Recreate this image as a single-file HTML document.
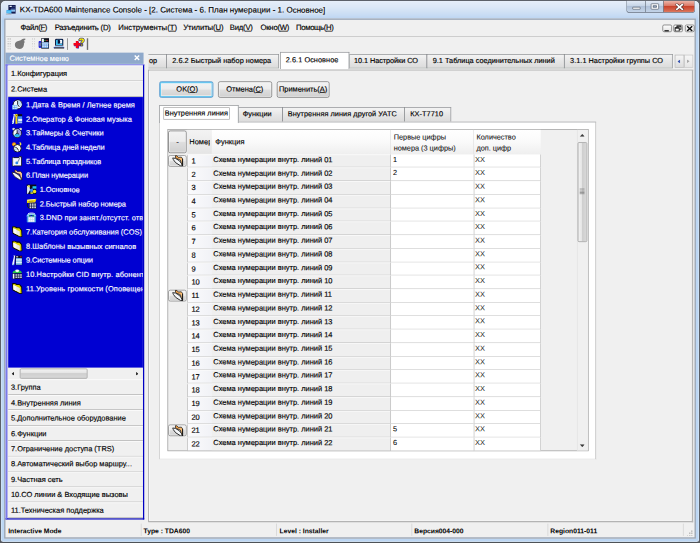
<!DOCTYPE html>
<html lang="ru"><head><meta charset="utf-8"><title>KX-TDA600 Maintenance Console</title>
<style>
html,body{margin:0;padding:0;width:700px;height:543px;overflow:hidden;background:#5a5d62;}
body{font-family:"Liberation Sans","DejaVu Sans",sans-serif;color:#000;-webkit-text-stroke:0.22px;}
#w{position:absolute;left:0;top:0;width:1024px;height:795px;transform:scale(0.68359375);transform-origin:0 0;overflow:hidden;}
#w div{box-sizing:border-box;}
#frame{position:absolute;left:0;top:0;width:1024px;height:794.3px;border-radius:8px 8px 5px 5px;background:linear-gradient(#e6eef9 0,#dbe7f6 10px,#c6dbf3 22px,#b6d1f0 29px,#bcd6f3 60px,#bcd6f3 100%);border:1px solid #45484d;box-shadow:inset 0 0 0 1px #eaf3fc;}
.t{position:absolute;height:16px;line-height:16px;white-space:nowrap;transform:matrix(1,0.0012,0,1,0,0);transform-origin:0 50%;}
u{text-decoration:underline;}
#w svg{display:block;}
.item{background:#f0f0f0;border-top:1px solid #fff;border-bottom:1px solid #a0a0a0;}
.tab{background:linear-gradient(#f4f4f4,#e6e6e6 50%,#dcdcdc);border:1px solid #8c8e92;border-bottom:none;}
.btn{background:linear-gradient(#f3f3f3,#ececec 48%,#dedede 52%,#d0d0d0);border:1px solid #707070;border-radius:3px;box-shadow:inset 0 0 0 1px rgba(255,255,255,.8);}
.w{color:#fff;}
.b{font-weight:bold;}
</style></head><body><div id="w">
<div id="frame"></div>

<div class="t" style="left:29.26px;top:6.19px;font-size:11.7px;text-shadow:0 0 5px #fff,0 0 8px #fff;">KX-TDA600 Maintenance Console - [2. Система - 6. План нумерации - 1. Основное]</div>
<div style="position:absolute;left:7.75px;top:6.88px;width:15.51px;height:15.51px;"><svg width="100%" height="100%" viewBox="0 0 16 16" preserveAspectRatio="none"><rect x="4.4" y="0.3" width="11.3" height="13" fill="#141d4e"/><rect x="6.2" y="1.5" width="3.3" height="1.8" fill="#eef3fa"/><rect x="10.5" y="2" width="4" height="1.2" fill="#3a4a8a"/><rect x="7.7" y="7.1" width="7.1" height="3.3" fill="#8cc0ee"/><rect x="8.4" y="4.6" width="6.4" height="1.4" fill="#32448e"/><rect x="1.5" y="8" width="7.5" height="5.3" fill="#2fa4ea"/><rect x="2.4" y="9" width="5.6" height="3.3" fill="#5cc4f6"/><path d="M0 15.7 L1.2 13.3 L9.4 13.3 L8.6 15.7 Z" fill="#b9bfcc"/></svg></div>
<div style="position:absolute;left:916.19px;top:0.73px;width:100.5px;height:17.99px;border:1px solid #6a7482;border-top:none;border-radius:0 0 5px 5px;overflow:hidden;background:linear-gradient(#e3ebf6,#c6d4e6 45%,#b0c1d8 50%,#c4d4e8);"><div style="position:absolute;left:27.21px;top:0;width:1px;height:100%;background:#6a7482"></div><div style="position:absolute;left:52.66px;top:0;right:0;height:100%;background:linear-gradient(#ecb8ac,#dc7a68 42%,#c9432c 50%,#d7674e 85%,#dd8068);border-left:1px solid #6a5a5e"></div><div style="position:absolute;left:8.19px;top:9.22px;width:11.41px;height:4.1px;background:#fff;border:1px solid #56606e;border-radius:1px"></div><div style="position:absolute;left:34.52px;top:4.39px;width:12.29px;height:9.07px;border:1px solid #56606e;background:#fff;border-radius:1.5px"><div style="position:absolute;left:2px;top:2px;right:2px;bottom:2px;border:1px solid #56606e;background:#a9bbd4"></div></div><svg style="position:absolute;left:71.09px;top:4.39px" width="12.29" height="10.24" viewBox="0 0 12 10"><path d="M2 1.6 L10 8.4 M10 1.6 L2 8.4" stroke="#4a3030" stroke-width="4.2" stroke-linecap="square"/><path d="M2 1.6 L10 8.4 M10 1.6 L2 8.4" stroke="#fff" stroke-width="2.4" stroke-linecap="square"/></svg></div>
<div style="position:absolute;left:6.14px;top:27.21px;width:1012.3px;height:760.69px;background:#f0f0f0;border:2.19px solid #9aa5b4;"></div>
<div class="t" style="left:30.43px;top:32.37px;font-size:11.3px;letter-spacing:-0.492px;">Файл(<u>F</u>)</div>
<div class="t" style="left:80.02px;top:32.37px;font-size:11.3px;letter-spacing:-0.319px;">Разъединить (D)</div>
<div class="t" style="left:172.62px;top:32.37px;font-size:11.3px;letter-spacing:0.101px;">Инструменты(<u>T</u>)</div>
<div class="t" style="left:267.7px;top:32.37px;font-size:11.3px;letter-spacing:-0.175px;">Утилиты(<u>U</u>)</div>
<div class="t" style="left:336.46px;top:32.37px;font-size:11.3px;letter-spacing:-0.310px;">Вид(<u>V</u>)</div>
<div class="t" style="left:381.07px;top:32.37px;font-size:11.3px;letter-spacing:-0.352px;">Окно(<u>W</u>)</div>
<div class="t" style="left:433.3px;top:32.37px;font-size:11.3px;letter-spacing:-0.497px;">Помощь(<u>H</u>)</div>
<div style="position:absolute;left:968.85px;top:35.84px;width:13.75px;height:11.56px;border:1px solid #6a6a6a;border-radius:2.5px;background:linear-gradient(#fdfdfd,#e2e2e2);overflow:hidden;"><svg style="position:absolute;left:-1px;top:-1px" width="13.75" height="11.56" viewBox="0 0 13.75 11.6"><rect x="3" y="8.2" width="6.4" height="2.4" fill="#111"/></svg></div>
<div style="position:absolute;left:985.38px;top:35.84px;width:13.75px;height:11.56px;border:1px solid #6a6a6a;border-radius:2.5px;background:linear-gradient(#fdfdfd,#e2e2e2);overflow:hidden;"><svg style="position:absolute;left:-1px;top:-1px" width="13.75" height="11.56" viewBox="0 0 13.75 11.6"><rect x="5.2" y="1.8" width="6" height="5" fill="#fff" stroke="#111" stroke-width="1.3"/><rect x="5.2" y="1.6" width="6" height="1.4" fill="#111"/><rect x="2.6" y="4.6" width="6" height="5" fill="#fff" stroke="#111" stroke-width="1.3"/><rect x="2.6" y="4.4" width="6" height="1.4" fill="#111"/></svg></div>
<div style="position:absolute;left:1002.06px;top:35.84px;width:13.75px;height:11.56px;border:1px solid #6a6a6a;border-radius:2.5px;background:linear-gradient(#fdfdfd,#e2e2e2);overflow:hidden;"><svg style="position:absolute;left:-1px;top:-1px" width="13.75" height="11.56" viewBox="0 0 13.75 11.6"><path d="M3.2 2.4 L10.6 9.4 M10.6 2.4 L3.2 9.4" stroke="#111" stroke-width="2.1"/></svg></div>
<div style="position:absolute;left:8.78px;top:52.66px;width:1007.18px;height:1.32px;background:#bdbdbd;"></div>
<div style="position:absolute;left:11.41px;top:56.47px;width:1.46px;height:1.46px;background:#c2c2c2;"></div>
<div style="position:absolute;left:14.34px;top:56.47px;width:1.46px;height:1.46px;background:#c2c2c2;"></div>
<div style="position:absolute;left:11.41px;top:59.98px;width:1.46px;height:1.46px;background:#c2c2c2;"></div>
<div style="position:absolute;left:14.34px;top:59.98px;width:1.46px;height:1.46px;background:#c2c2c2;"></div>
<div style="position:absolute;left:11.41px;top:63.49px;width:1.46px;height:1.46px;background:#c2c2c2;"></div>
<div style="position:absolute;left:14.34px;top:63.49px;width:1.46px;height:1.46px;background:#c2c2c2;"></div>
<div style="position:absolute;left:11.41px;top:67.0px;width:1.46px;height:1.46px;background:#c2c2c2;"></div>
<div style="position:absolute;left:14.34px;top:67.0px;width:1.46px;height:1.46px;background:#c2c2c2;"></div>
<div style="position:absolute;left:11.41px;top:70.51px;width:1.46px;height:1.46px;background:#c2c2c2;"></div>
<div style="position:absolute;left:14.34px;top:70.51px;width:1.46px;height:1.46px;background:#c2c2c2;"></div>
<div style="position:absolute;left:46.81px;top:56.47px;width:1.46px;height:1.46px;background:#c2c2c2;"></div>
<div style="position:absolute;left:49.74px;top:56.47px;width:1.46px;height:1.46px;background:#c2c2c2;"></div>
<div style="position:absolute;left:46.81px;top:59.98px;width:1.46px;height:1.46px;background:#c2c2c2;"></div>
<div style="position:absolute;left:49.74px;top:59.98px;width:1.46px;height:1.46px;background:#c2c2c2;"></div>
<div style="position:absolute;left:46.81px;top:63.49px;width:1.46px;height:1.46px;background:#c2c2c2;"></div>
<div style="position:absolute;left:49.74px;top:63.49px;width:1.46px;height:1.46px;background:#c2c2c2;"></div>
<div style="position:absolute;left:46.81px;top:67.0px;width:1.46px;height:1.46px;background:#c2c2c2;"></div>
<div style="position:absolute;left:49.74px;top:67.0px;width:1.46px;height:1.46px;background:#c2c2c2;"></div>
<div style="position:absolute;left:46.81px;top:70.51px;width:1.46px;height:1.46px;background:#c2c2c2;"></div>
<div style="position:absolute;left:49.74px;top:70.51px;width:1.46px;height:1.46px;background:#c2c2c2;"></div>
<div style="position:absolute;left:21.36px;top:55.88px;width:16.97px;height:16.38px;"><svg width="100%" height="100%" viewBox="0 0 16 16" preserveAspectRatio="none"><path d="M6.6 3.6 C8.2 3.4 9.4 2.6 10.6 1.4 C11.8 0.3 14.6 0.2 15.6 1 C15.2 2.2 13.8 2.6 12.8 3.8 C13.6 4.4 14.4 4.6 14.8 5.4 L13 6.6 C13.8 7.6 13.6 8.4 13.2 9 C13.2 12.6 10.6 15.4 6.8 15.4 C3 15.4 0.6 12.6 0.6 9.4 C0.6 6.2 3.2 3.8 6.6 3.6 Z" fill="#777"/></svg></div>
<div style="position:absolute;left:55.88px;top:55.3px;width:16.09px;height:16.97px;"><svg width="100%" height="100%" viewBox="0 0 16 16" preserveAspectRatio="none"><rect x="0.3" y="4.6" width="4.4" height="9.6" rx="1.6" fill="#2323e0"/><rect x="1.4" y="7" width="2.6" height="4.8" fill="#6d78a8"/><rect x="4.3" y="0.8" width="11.3" height="14.4" fill="#0c0f1c"/><rect x="5.2" y="1.6" width="3" height="4.4" fill="#f3f7fc"/><rect x="8.6" y="3.2" width="2.4" height="1.2" fill="#3cb050"/><rect x="11.4" y="3.2" width="2.4" height="1.2" fill="#d83838"/><rect x="5.2" y="6.6" width="9.6" height="7.6" fill="#5f9fe8"/><rect x="5.2" y="6.6" width="9.6" height="2" fill="#b8d6f6"/><g fill="#f0f6fd"><rect x="5.8" y="9.4" width="2.2" height="1.5"/><rect x="8.9" y="9.4" width="2.2" height="1.5"/><rect x="12" y="9.4" width="2.2" height="1.5"/><rect x="5.8" y="11.8" width="2.2" height="1.5"/><rect x="8.9" y="11.8" width="2.2" height="1.5"/><rect x="12" y="11.8" width="2.2" height="1.5"/></g></svg></div>
<div style="position:absolute;left:77.53px;top:56.47px;width:16.68px;height:15.8px;"><svg width="100%" height="100%" viewBox="0 0 16 16" preserveAspectRatio="none"><path d="M2.4 3 C2.4 1.2 3.4 0.6 5 0.6 L11.4 0.6 C13 0.6 14 1.2 14 3 L14 11 L2.4 11 Z" fill="#10163c"/><path d="M3.8 3.2 C3.8 2.4 4.4 2 5.2 2 L11.2 2 C12 2 12.6 2.4 12.6 3.2 L12.6 9.8 L3.8 9.8 Z" fill="#3fc0f2"/><rect x="6.2" y="2.4" width="6" height="5.6" fill="#0c1236"/><path d="M8.8 2.6 L12.2 2.6 L12.2 7.8 L8.8 7.8 C10 6.6 10 3.8 8.8 2.6 Z" fill="#f2f7fc"/><path d="M1.4 13.4 L3 11 L13.4 11 L15 13.4 Z" fill="#9ec4ee"/><rect x="0.8" y="13.4" width="14.8" height="1.7" fill="#0b0e22"/><rect x="0.4" y="12.8" width="1.4" height="1.4" fill="#2a3ad8"/><rect x="14.4" y="12.8" width="1.4" height="1.4" fill="#2a3ad8"/></svg></div>
<div style="position:absolute;left:97.87px;top:56.03px;width:1.32px;height:16.68px;background:#6c6c6c;"></div>
<div style="position:absolute;left:106.5px;top:55.3px;width:17.26px;height:16.97px;"><svg width="100%" height="100%" viewBox="0 0 16 16" preserveAspectRatio="none"><path d="M4 5.2 H7.4 V8 H10.2 V11.4 H7.4 V14.6 H4 V11.4 H0.8 V8 H4 Z" fill="#3030c0" transform="translate(0.5,0.6)"/><path d="M3.6 4.6 H7.2 V7.6 H10 V11 H7.2 V14.2 H3.6 V11 H0.4 V7.6 H3.6 Z" fill="#f4001c"/><path d="M7.6 4 C7.4 1.4 9.4 0.5 11.4 0.5 C13.8 0.5 15.4 1.8 15.4 3.8 C15.4 6 13.2 6.4 13 8 H10.2 C10.2 5.8 12.2 5.2 12.2 4 C12.2 3.2 10.8 3.2 10.6 4.6 Z M10.2 9 H13 V11.6 H10.2 Z" fill="#f8ec00" stroke="#1a1a70" stroke-width="1" stroke-linejoin="round"/></svg></div>
<div style="position:absolute;left:127.27px;top:56.03px;width:1.32px;height:16.68px;background:#6c6c6c;"></div>
<div style="position:absolute;left:8.48px;top:76.8px;width:201.87px;height:17.12px;background:linear-gradient(#8fa9cb 90%,#a9c6d2);"></div>
<div class="t" style="left:14.04px;top:77.43px;font-size:10.9px;color:#fff;">Системное меню</div>
<div style="position:absolute;left:196.46px;top:80.46px;width:8.63px;height:8.78px;"><svg width="100%" height="100%" viewBox="0 0 8 8"><path d="M1 1 L7 7 M7 1 L1 7" stroke="#fff" stroke-width="1.9"/></svg></div>
<div style="position:absolute;left:8.48px;top:93.92px;width:202.46px;height:665.6px;background:#f0f0f0;border-style:solid;border-color:#7a7aea #0000c4 #0000c4 #7a7aea;border-width:2px 2px 2px 3px;"></div>
<div class="item" style="position:absolute;left:11.85px;top:95.82px;width:197.19px;height:23.55px;"></div>
<div class="t" style="left:15.95px;top:99.15px;font-size:10.9px;">1.Конфигурация</div>
<div class="item" style="position:absolute;left:11.85px;top:119.37px;width:197.19px;height:22.24px;"></div>
<div class="t" style="left:15.95px;top:122.05px;font-size:10.9px;">2.Система</div>
<div style="position:absolute;left:11.85px;top:141.6px;width:197.19px;height:396.14px;background:#0000d2;overflow:hidden;"></div>
<div class="t" style="left:37.74px;top:144.87px;font-size:10.9px;letter-spacing:0.024px;color:#fff;">1.Дата &amp; Время / Летнее время</div>
<div style="position:absolute;left:17.41px;top:144.97px;width:15.95px;height:15.95px;"><svg width="100%" height="100%" viewBox="0 0 16 16" preserveAspectRatio="none"><circle cx="8.8" cy="7.8" r="6.6" fill="#eef6fc" stroke="#0a0a14" stroke-width="1.3"/><path d="M8.8 7.8 L8.8 1.8 A6 6 0 0 1 13.8 11 Z" fill="#bfe2f6"/><path d="M8.8 2.6 V8 L11.4 11.4" stroke="#16161e" stroke-width="1.3" fill="none"/><rect x="0.8" y="8.6" width="7.6" height="6.6" fill="#66b6ee"/><rect x="1.8" y="9.6" width="2.3" height="4.6" fill="#f0f7fd"/><rect x="5.1" y="9.6" width="2.3" height="4.6" fill="#f0f7fd"/><rect x="1.8" y="11.4" width="5.6" height="1" fill="#3f8ade"/></svg></div>
<div class="t" style="left:37.74px;top:165.55px;font-size:10.9px;letter-spacing:-0.027px;color:#fff;">2.Оператор &amp; Фоновая музыка</div>
<div style="position:absolute;left:17.41px;top:165.65px;width:15.95px;height:15.95px;"><svg width="100%" height="100%" viewBox="0 0 16 16" preserveAspectRatio="none"><path d="M0.6 13.4 L3.2 2 L2.2 0.8 L5 0.8 L4.6 2.4 L3.4 15 L0.8 15.4 Z" fill="#f2f6fa"/><path d="M1 13 L3.4 15" stroke="#3a8ee8" stroke-width="1.4"/><rect x="5.6" y="3.4" width="3" height="11.8" fill="#f4da10"/><circle cx="7.1" cy="2.8" r="2.3" fill="#f4da10"/><circle cx="7.1" cy="2.8" r="0.9" fill="#8a7a10"/><rect x="8.8" y="1" width="6.8" height="3.2" fill="#0c0c18"/><rect x="8.8" y="4.2" width="6.8" height="7" fill="#3c8ef0"/><rect x="9.6" y="8" width="6" height="3.4" fill="#e6f2fc"/><rect x="8.8" y="11.6" width="6.8" height="2.8" fill="#9cc8f4"/></svg></div>
<div class="t" style="left:37.74px;top:186.24px;font-size:10.9px;letter-spacing:-0.060px;color:#fff;">3.Таймеры &amp; Счетчики</div>
<div style="position:absolute;left:17.41px;top:186.34px;width:15.95px;height:15.95px;"><svg width="100%" height="100%" viewBox="0 0 16 16" preserveAspectRatio="none"><circle cx="3" cy="2.8" r="2" fill="#d8dad0"/><circle cx="13.2" cy="2.8" r="2" fill="#d8dad0"/><circle cx="8.1" cy="8.8" r="6.3" fill="#f2f6fa" stroke="#0a0a14" stroke-width="1.3"/><path d="M8.1 8.8 L8.1 2.9 A5.9 5.9 0 0 1 13.2 11.8 Z" fill="#9a98e4"/><path d="M8.1 8.8 L13.2 11.8 A5.9 5.9 0 0 1 3 11.8 Z" fill="#2fb2f0"/><path d="M8.1 4.5 V8.8 L11 10.4 M8.1 8.8 L5.6 10.6" stroke="#0a0a14" stroke-width="1.2" fill="none"/></svg></div>
<div class="t" style="left:37.74px;top:206.92px;font-size:10.9px;letter-spacing:-0.187px;color:#fff;">4.Таблица дней недели</div>
<div style="position:absolute;left:17.41px;top:207.02px;width:15.95px;height:15.95px;"><svg width="100%" height="100%" viewBox="0 0 16 16" preserveAspectRatio="none"><circle cx="3.6" cy="4" r="3" fill="#ee7a12"/><circle cx="3.8" cy="4.2" r="1.7" fill="#f9d422"/><path d="M11.2 0.6 C14.6 1 15.6 4.6 12.6 6.6 L10.6 6 C12.6 4.6 12.6 2.4 11.2 0.6 Z" fill="#efe24a"/><circle cx="8.5" cy="10" r="5.6" fill="#f6f8fa" stroke="#0a0a14" stroke-width="1.3"/><path d="M8.5 10 L5.4 8.4 M8.5 10 L10 13.2" stroke="#0a0a14" stroke-width="1.3" fill="none"/><circle cx="6" cy="12" r="1.6" fill="#a8d8f0"/></svg></div>
<div class="t" style="left:37.74px;top:227.61px;font-size:10.9px;letter-spacing:-0.133px;color:#fff;">5.Таблица праздников</div>
<div style="position:absolute;left:17.41px;top:227.71px;width:15.95px;height:15.95px;"><svg width="100%" height="100%" viewBox="0 0 16 16" preserveAspectRatio="none"><path d="M1.4 2.6 L10.4 2.6 L11.6 0.8 L14.6 1.4 L14.6 14.8 L1.4 14.8 Z" fill="#f6f8fb" stroke="#0a0a14" stroke-width="1.2" stroke-linejoin="round"/><path d="M12.6 1.6 L8.6 10" stroke="#8a93a6" stroke-width="1.5"/><circle cx="7.6" cy="10.4" r="2.1" fill="#2f86e8"/><rect x="1.6" y="2.8" width="1.8" height="11.6" fill="#dfe6f0"/></svg></div>
<div class="t" style="left:37.74px;top:248.29px;font-size:10.9px;letter-spacing:-0.197px;color:#fff;">6.План нумерации</div>
<div style="position:absolute;left:17.41px;top:248.39px;width:15.95px;height:15.95px;"><svg width="100%" height="100%" viewBox="0 0 16 16" preserveAspectRatio="none"><path d="M0.4 4 L4.7 4.6 L10 7.7 L13.2 11.4 L15.1 15.4 L11.9 15.1 L5 10.8 L1.6 6.5 Z" fill="#f4f5f6" stroke="#1a1a1a" stroke-width="1.1" stroke-linejoin="round"/><path d="M4.7 0.4 L6.9 0.9 L8.8 3.1 L13.2 2.8 L15.3 5.6 L15.3 15 L13.2 11.4 L11.9 7.1 L6.3 4.6 L4.7 3.6 Z" fill="#f8b268" stroke="#1a1a1a" stroke-width="0.9" stroke-linejoin="round"/><path d="M6.4 2.2 L8.4 4.2 L12.8 4.2 L14.4 6.6 L14.4 11" stroke="#fde0bc" stroke-width="1.2" fill="none"/></svg></div>
<div class="t" style="left:58.37px;top:268.98px;font-size:10.9px;letter-spacing:-0.052px;color:#fff;">1.Основное</div>
<div style="position:absolute;left:38.03px;top:269.08px;width:15.95px;height:15.95px;"><svg width="100%" height="100%" viewBox="0 0 16 16" preserveAspectRatio="none"><rect x="1" y="1" width="14" height="14" fill="#0a0c1a"/><path d="M1.6 3 L5 2 L6 9 L3 14.4 L1.6 14.4 Z" fill="#dfeaf6"/><rect x="9.6" y="3.4" width="5.8" height="3.6" fill="#22c6f2"/><path d="M5.6 8 L9.6 6.4 L11 10 L7 13.4 Z" fill="#3a86ee"/><circle cx="12.6" cy="11.2" r="2.6" fill="#f2e620"/><rect x="2.6" y="2.2" width="3" height="2.6" fill="#e8e04a"/><rect x="6.6" y="12.4" width="4" height="2.2" fill="#d6dc4a"/></svg></div>
<div class="t" style="left:58.37px;top:289.66px;font-size:10.9px;letter-spacing:-0.118px;color:#fff;">2.Быстрый набор номера</div>
<div style="position:absolute;left:38.03px;top:289.76px;width:15.95px;height:15.95px;"><svg width="100%" height="100%" viewBox="0 0 16 16" preserveAspectRatio="none"><path d="M1.4 2.2 L15.4 0.8 L13.6 6.4 L1.4 7 Z" fill="#f2d808"/><path d="M2 3 L13 1.8" stroke="#fbf6c0" stroke-width="1.3"/><path d="M4 4.8 L11 4.2" stroke="#a08a10" stroke-width="1"/><rect x="4.4" y="6.8" width="11" height="8.6" fill="#10143a"/><path d="M2.6 7 C1.6 9.6 2 12.6 4.4 14.4" stroke="#10143a" stroke-width="1.6" fill="none"/><g fill="#eef2f8"><rect x="5.4" y="7.8" width="2.4" height="1.8"/><rect x="8.8" y="7.8" width="2.4" height="1.8"/><rect x="12.2" y="7.8" width="2.4" height="1.8"/><rect x="5.4" y="10.4" width="2.4" height="1.8"/><rect x="8.8" y="10.4" width="2.4" height="1.8"/><rect x="12.2" y="10.4" width="2.4" height="1.8"/><rect x="5.4" y="13" width="2.4" height="1.6"/><rect x="8.8" y="13" width="2.4" height="1.6"/><rect x="12.2" y="13" width="2.4" height="1.6"/></g></svg></div>
<div class="t" style="left:58.37px;top:310.35px;width:150.82px;font-size:10.9px;letter-spacing:0.13px;overflow:hidden;color:#fff;">3.DND при занят./отсутст. отв</div>
<div style="position:absolute;left:38.03px;top:310.45px;width:15.95px;height:15.95px;"><svg width="100%" height="100%" viewBox="0 0 16 16" preserveAspectRatio="none"><path d="M1 5.6 C1 0.8 15 0.8 15 5.6 L15 7 L11.4 7 L11.4 4.6 L4.6 4.6 L4.6 7 L1 7 Z" fill="#86ccf2"/><path d="M3 2.6 C6 1.2 10 1.2 13 2.6" stroke="#f2f8fc" stroke-width="1.2" fill="none"/><rect x="1.2" y="6.4" width="13.6" height="9" rx="1" fill="#3f93e6"/><rect x="3.2" y="6.8" width="9.6" height="8.2" fill="#c4dcee"/><circle cx="5.6" cy="5.8" r="1.3" fill="#1fa044"/><circle cx="10.4" cy="5.8" r="1.3" fill="#1fa044"/><g fill="#f4f8fb"><rect x="4.2" y="8.6" width="2" height="2.2"/><rect x="7" y="8.6" width="2" height="2.2"/><rect x="9.8" y="8.6" width="2" height="2.2"/><rect x="4.2" y="11.8" width="2" height="2.2"/><rect x="7" y="11.8" width="2" height="2.2"/><rect x="9.8" y="11.8" width="2" height="2.2"/></g></svg></div>
<div class="t" style="left:37.74px;top:331.03px;font-size:10.9px;letter-spacing:0.001px;color:#fff;">7.Категория обслуживания (COS)</div>
<div style="position:absolute;left:17.41px;top:331.13px;width:15.95px;height:15.95px;"><svg width="100%" height="100%" viewBox="0 0 16 16" preserveAspectRatio="none"><path d="M1.4 0.8 L4.3 0.4 L7.7 2.2 L11.5 2.2 L14.8 6.1 L15.3 15 L12.1 15.6 L2.1 10.3 Z" fill="#ddd400" stroke="#0a0a0a" stroke-width="1.5" stroke-linejoin="round"/><path d="M2.5 3 L12 7.5 L12 14.4 L2.8 9.5 Z" fill="#e9e9e4"/><path d="M2.5 3 L7 5.1 L7 11.8 L2.8 9.5 Z" fill="#fafaf6"/></svg></div>
<div class="t" style="left:37.74px;top:351.72px;font-size:10.9px;letter-spacing:0.016px;color:#fff;">8.Шаблоны вызывных сигналов</div>
<div style="position:absolute;left:17.41px;top:351.82px;width:15.95px;height:15.95px;"><svg width="100%" height="100%" viewBox="0 0 16 16" preserveAspectRatio="none"><path d="M1.4 0.8 L4.3 0.4 L7.7 2.2 L11.5 2.2 L14.8 6.1 L15.3 15 L12.1 15.6 L2.1 10.3 Z" fill="#ddd400" stroke="#0a0a0a" stroke-width="1.5" stroke-linejoin="round"/><path d="M2.5 3 L12 7.5 L12 14.4 L2.8 9.5 Z" fill="#e9e9e4"/><path d="M2.5 3 L7 5.1 L7 11.8 L2.8 9.5 Z" fill="#fafaf6"/></svg></div>
<div class="t" style="left:37.74px;top:372.4px;font-size:10.9px;letter-spacing:-0.132px;color:#fff;">9.Системные опции</div>
<div style="position:absolute;left:17.41px;top:372.5px;width:15.95px;height:15.95px;"><svg width="100%" height="100%" viewBox="0 0 16 16" preserveAspectRatio="none"><path d="M0.6 13.6 L3.4 2.2 L2.6 0.8 L5.4 0.8 L5 2.6 L3.6 15 L1 15.4 Z" fill="#f2f6fa"/><path d="M1 13.2 L3.4 15" stroke="#3a8ee8" stroke-width="1.4"/><rect x="5.6" y="1" width="10" height="14.2" fill="#0c0e1e"/><rect x="6.4" y="4.6" width="8.6" height="9.8" fill="#86c6f2"/><rect x="6.4" y="6.4" width="8.6" height="1.6" fill="#eef6fc"/><rect x="6.4" y="10" width="8.6" height="1.6" fill="#eef6fc"/><rect x="12.6" y="2" width="2" height="1.4" fill="#e03030"/><rect x="6.6" y="2" width="3" height="1.4" fill="#f0f4f8"/></svg></div>
<div class="t" style="left:37.74px;top:393.09px;width:171.45px;font-size:10.9px;letter-spacing:0.13px;overflow:hidden;color:#fff;">10.Настройки CID внутр. абоненто</div>
<div style="position:absolute;left:17.41px;top:393.19px;width:15.95px;height:15.95px;"><svg width="100%" height="100%" viewBox="0 0 16 16" preserveAspectRatio="none"><path d="M1.6 5.8 C1.6 0.8 14.8 0.8 14.8 5.8 L14.8 6.6 L1.6 6.6 Z" fill="#22c244"/><ellipse cx="8.2" cy="3.2" rx="2.8" ry="1.9" fill="#f4f8f6"/><rect x="1" y="6.6" width="14.6" height="8.8" fill="#12164a"/><rect x="1.8" y="7.6" width="2.2" height="7" fill="#f0f4fa"/><g fill="#eef2f8"><rect x="5.6" y="8.4" width="2.6" height="1.8"/><rect x="9" y="8.4" width="2.6" height="1.8"/><rect x="12.4" y="8.4" width="2.6" height="1.8"/><rect x="5.6" y="11.6" width="2.6" height="1.8"/><rect x="9" y="11.6" width="2.6" height="1.8"/><rect x="12.4" y="11.6" width="2.6" height="1.8"/></g></svg></div>
<div class="t" style="left:37.74px;top:413.77px;width:171.45px;font-size:10.9px;letter-spacing:0.13px;overflow:hidden;color:#fff;">11.Уровень громкости (Оповещен</div>
<div style="position:absolute;left:17.41px;top:413.87px;width:15.95px;height:15.95px;"><svg width="100%" height="100%" viewBox="0 0 16 16" preserveAspectRatio="none"><path d="M1.4 0.8 L4.3 0.4 L7.7 2.2 L11.5 2.2 L14.8 6.1 L15.3 15 L12.1 15.6 L2.1 10.3 Z" fill="#ddd400" stroke="#0a0a0a" stroke-width="1.5" stroke-linejoin="round"/><path d="M2.5 3 L12 7.5 L12 14.4 L2.8 9.5 Z" fill="#e9e9e4"/><path d="M2.5 3 L7 5.1 L7 11.8 L2.8 9.5 Z" fill="#fafaf6"/></svg></div>
<div style="position:absolute;left:11.85px;top:537.75px;width:197.19px;height:17.12px;background:#f0f0f0;"></div>
<div style="position:absolute;left:28.53px;top:538.77px;width:99.47px;height:15.07px;border:1px solid #979797;border-radius:2px;background:linear-gradient(#f2f2f2,#e4e4e4 45%,#cfcfcf 50%,#d8d8d8);"></div>
<div style="position:absolute;left:17.26px;top:543.6px;width:3.51px;height:5.85px;"><svg width="100%" height="100%" viewBox="0 0 4 6" preserveAspectRatio="none"><path d="M4 0 L0 3 L4 6 Z" fill="#222"/></svg></div>
<div style="position:absolute;left:198.95px;top:543.6px;width:3.51px;height:5.85px;"><svg width="100%" height="100%" viewBox="0 0 4 6" preserveAspectRatio="none"><path d="M0 0 L4 3 L0 6 Z" fill="#222"/></svg></div>
<div class="item" style="position:absolute;left:11.85px;top:555.3px;width:197.19px;height:22.47px;"></div>
<div class="t" style="left:15.95px;top:558.1px;font-size:10.9px;">3.Группа</div>
<div class="item" style="position:absolute;left:11.85px;top:577.77px;width:197.19px;height:22.47px;"></div>
<div class="t" style="left:15.95px;top:580.57px;font-size:10.9px;">4.Внутренняя линия</div>
<div class="item" style="position:absolute;left:11.85px;top:600.24px;width:197.19px;height:22.47px;"></div>
<div class="t" style="left:15.95px;top:603.04px;font-size:10.9px;">5.Дополнительное оборудование</div>
<div class="item" style="position:absolute;left:11.85px;top:622.71px;width:197.19px;height:22.47px;"></div>
<div class="t" style="left:15.95px;top:625.5px;font-size:10.9px;">6.Функции</div>
<div class="item" style="position:absolute;left:11.85px;top:645.18px;width:197.19px;height:22.47px;"></div>
<div class="t" style="left:15.95px;top:647.97px;font-size:10.9px;">7.Ограничение доступа (TRS)</div>
<div class="item" style="position:absolute;left:11.85px;top:667.65px;width:197.19px;height:22.47px;"></div>
<div class="t" style="left:15.95px;top:670.44px;font-size:10.9px;">8.Автоматический выбор маршру...</div>
<div class="item" style="position:absolute;left:11.85px;top:690.12px;width:197.19px;height:22.47px;"></div>
<div class="t" style="left:15.95px;top:692.91px;font-size:10.9px;">9.Частная сеть</div>
<div class="item" style="position:absolute;left:11.85px;top:712.59px;width:197.19px;height:22.47px;"></div>
<div class="t" style="left:15.95px;top:715.38px;font-size:10.9px;">10.СО линии &amp; Входящие вызовы</div>
<div class="item" style="position:absolute;left:11.85px;top:735.06px;width:197.19px;height:22.47px;"></div>
<div class="t" style="left:15.95px;top:737.85px;font-size:10.9px;">11.Техническая поддержка</div>
<div class="t" style="left:11.7px;top:769.07px;font-size:9.9px;font-weight:bold;-webkit-text-stroke:0;">Interactive Mode</div>
<div class="t" style="left:210.07px;top:769.07px;font-size:9.9px;font-weight:bold;-webkit-text-stroke:0;">Type : TDA600</div>
<div class="t" style="left:408.72px;top:769.07px;font-size:9.9px;font-weight:bold;-webkit-text-stroke:0;">Level : Installer</div>
<div class="t" style="left:606.35px;top:769.07px;font-size:9.9px;font-weight:bold;-webkit-text-stroke:0;">Версия004-000</div>
<div class="t" style="left:805.45px;top:769.07px;font-size:9.9px;font-weight:bold;-webkit-text-stroke:0;">Region011-011</div>
<div style="position:absolute;left:205.53px;top:765.81px;width:1.02px;height:18.29px;background:#d0d0d0;"></div>
<div style="position:absolute;left:403.75px;top:765.81px;width:1.02px;height:18.29px;background:#d0d0d0;"></div>
<div style="position:absolute;left:601.97px;top:765.81px;width:1.02px;height:18.29px;background:#d0d0d0;"></div>
<div style="position:absolute;left:800.91px;top:765.81px;width:1.02px;height:18.29px;background:#d0d0d0;"></div>
<div style="position:absolute;left:999.13px;top:765.81px;width:1.02px;height:18.29px;background:#d0d0d0;"></div>
<div style="position:absolute;left:1011.13px;top:776.19px;width:1.76px;height:1.76px;background:#b4b4b4;"></div>
<div style="position:absolute;left:1011.13px;top:779.41px;width:1.76px;height:1.76px;background:#b4b4b4;"></div>
<div style="position:absolute;left:1011.13px;top:782.63px;width:1.76px;height:1.76px;background:#b4b4b4;"></div>
<div style="position:absolute;left:1007.91px;top:779.41px;width:1.76px;height:1.76px;background:#b4b4b4;"></div>
<div style="position:absolute;left:1007.91px;top:782.63px;width:1.76px;height:1.76px;background:#b4b4b4;"></div>
<div style="position:absolute;left:1004.69px;top:782.63px;width:1.76px;height:1.76px;background:#b4b4b4;"></div>
<div class="tab" style="position:absolute;left:216.65px;top:78.99px;width:27.21px;height:21.21px;border-bottom:1px solid #a7ada9;border-left:none;"></div>
<div class="t" style="left:218.11px;top:80.21px;font-size:10.7px;">ор</div>
<div class="tab" style="position:absolute;left:242.83px;top:78.99px;width:165.3px;height:21.21px;border-bottom:1px solid #a7ada9;"></div>
<div class="t" style="left:251.61px;top:80.21px;font-size:10.7px;letter-spacing:0.022px;">2.6.2 Быстрый набор номера</div>
<div class="tab" style="position:absolute;left:510.54px;top:78.99px;width:114.83px;height:21.21px;border-bottom:1px solid #a7ada9;"></div>
<div class="t" style="left:517.56px;top:80.21px;font-size:10.7px;letter-spacing:-0.101px;">10.1 Настройки СО</div>
<div class="tab" style="position:absolute;left:624.35px;top:78.99px;width:201.44px;height:21.21px;border-bottom:1px solid #a7ada9;"></div>
<div class="t" style="left:632.83px;top:80.21px;font-size:10.7px;letter-spacing:0.017px;">9.1 Таблица соединительных линий</div>
<div class="tab" style="position:absolute;left:824.76px;top:78.99px;width:159.01px;height:21.21px;border-bottom:1px solid #a7ada9;"></div>
<div class="t" style="left:833.83px;top:80.21px;font-size:10.7px;letter-spacing:0.027px;">3.1.1 Настройки группы СО</div>
<div style="position:absolute;left:409.6px;top:76.07px;width:101.38px;height:24.87px;background:#fff;border:1px solid #8c8e92;border-bottom:none;"></div>
<div class="t" style="left:418.08px;top:79.04px;font-size:10.7px;letter-spacing:0.092px;">2.6.1 Основное</div>
<div style="position:absolute;left:986.7px;top:79.73px;width:13.9px;height:19.02px;background:linear-gradient(#f6f6f6,#dcdcdc);border:1px solid #b5b5b5;"></div>
<div style="position:absolute;left:1000.59px;top:79.73px;width:13.17px;height:19.02px;background:linear-gradient(#f6f6f6,#e6e6e6);border:1px solid #c5c5c5;"></div>
<div style="position:absolute;left:990.94px;top:86.6px;width:4.1px;height:5.85px;"><svg width="100%" height="100%" viewBox="0 0 4 6" preserveAspectRatio="none"><path d="M4 0 L0 3 L4 6 Z" fill="#3a55b0"/></svg></div>
<div style="position:absolute;left:1005.28px;top:86.89px;width:3.8px;height:5.27px;"><svg width="100%" height="100%" viewBox="0 0 4 6" preserveAspectRatio="none"><path d="M0 0 L4 3 L0 6 Z" fill="#a8a8a8"/></svg></div>
<div style="position:absolute;left:216.65px;top:102.4px;width:797.7px;height:661.21px;background:#f0f0f0;border:1px solid #9a9a9a;border-right:2.34px solid #b4b4b4;border-bottom:2.05px solid #b4b4b4;box-shadow:inset 0 0 0 1px #fff;"></div>
<div class="btn" style="position:absolute;left:233.47px;top:119.37px;width:78.12px;height:23.7px;border-color:#2f86c8;box-shadow:inset 0 0 0 1.6px #4cc4f4cc, inset 0 0 0 2.6px #fff9;"></div>
<div class="t" style="left:257.9px;top:122.49px;font-size:10.9px;">OK(<u>O</u>)</div>
<div class="btn" style="position:absolute;left:318.9px;top:119.37px;width:78.99px;height:23.7px;"></div>
<div class="t" style="left:331.04px;top:122.49px;font-size:10.9px;">Отмена(<u>C</u>)</div>
<div class="btn" style="position:absolute;left:405.21px;top:119.37px;width:76.8px;height:23.7px;"></div>
<div class="t" style="left:408.43px;top:122.49px;font-size:10.9px;">Применить(<u>A</u>)</div>
<div class="tab" style="position:absolute;left:348.45px;top:156.82px;width:65.97px;height:21.65px;"></div>
<div class="t" style="left:355.47px;top:157.89px;font-size:10.7px;letter-spacing:0.038px;">Функции</div>
<div class="tab" style="position:absolute;left:413.4px;top:156.82px;width:178.91px;height:21.65px;"></div>
<div class="t" style="left:420.57px;top:157.89px;font-size:10.7px;letter-spacing:0.090px;">Внутренняя линия другой УАТС</div>
<div class="tab" style="position:absolute;left:591.29px;top:156.82px;width:69.19px;height:21.65px;"></div>
<div class="t" style="left:599.77px;top:157.89px;font-size:10.7px;letter-spacing:0.125px;">КХ-Т7710</div>
<div style="position:absolute;left:233.03px;top:177.88px;width:639.27px;height:493.86px;background:#fff;border:1px solid #c4c4c4;border-top-color:#98999c;border-right-color:#b4b4b4;border-bottom-color:#e0e0e0;"></div>
<div style="position:absolute;left:233.03px;top:153.6px;width:116.0px;height:26.77px;background:#fff;border:1px solid #8c8e92;border-bottom:none;"></div>
<div class="t" style="left:241.37px;top:157.3px;font-size:10.7px;letter-spacing:0.070px;">Внутренняя линия</div>
<div style="position:absolute;left:239.32px;top:156.82px;width:96.4px;height:18.58px;border:1px solid #a4a4a4;"></div>
<div style="position:absolute;left:244.74px;top:189.44px;width:615.86px;height:470.75px;background:#f0f0f0;border:1px solid #9a9a9a;"></div>
<div style="position:absolute;left:274.14px;top:190.46px;width:35.4px;height:34.23px;background:linear-gradient(#f3f3f3,#ececec 50%,#e5e5e5);overflow:hidden;"></div>
<div style="position:absolute;left:309.54px;top:190.46px;width:481.87px;height:34.23px;background:linear-gradient(#fff,#fafafa 50%,#efefef);"></div>
<div class="btn" style="position:absolute;left:246.49px;top:190.9px;width:26.04px;height:33.35px;"></div>
<div class="t" style="left:258.34px;top:198.99px;font-size:11px;">-</div>
<div class="t" style="left:276.92px;top:199.43px;width:29.99px;font-size:10.9px;overflow:hidden;">Номер</div>
<div class="t" style="left:314.51px;top:199.43px;font-size:10.9px;">Функция</div>
<div class="t" style="left:576.07px;top:191.83px;font-size:10.7px;-webkit-text-stroke:0.15px;color:#1a1a1a;">Первые цифры</div>
<div class="t" style="left:576.07px;top:207.77px;font-size:10.7px;-webkit-text-stroke:0.15px;color:#1a1a1a;">номера (3 цифры)</div>
<div class="t" style="left:697.05px;top:191.83px;font-size:10.7px;-webkit-text-stroke:0.15px;color:#1a1a1a;">Количество</div>
<div class="t" style="left:697.05px;top:207.77px;font-size:10.7px;-webkit-text-stroke:0.15px;color:#1a1a1a;">доп. цифр</div>
<div style="position:absolute;left:570.59px;top:190.46px;width:1.02px;height:34.23px;background:#e0e0e0;"></div>
<div style="position:absolute;left:692.15px;top:190.46px;width:1.02px;height:34.23px;background:#e0e0e0;"></div>
<div style="position:absolute;left:274.14px;top:225.72px;width:35.4px;height:19.73px;background:linear-gradient(90deg,#fbfbfd,#f1f2f6);border-bottom:1px solid #c9c9c9;border-top:1px solid #fff;border-left:1px solid #bcbcbc;"></div>
<div style="position:absolute;left:309.54px;top:225.72px;width:261.56px;height:19.73px;background:#efefef;border-bottom:1px solid #bdbdbd;border-top:1px solid #fdfdfd;"></div>
<div style="position:absolute;left:571.1px;top:225.72px;width:121.56px;height:19.73px;background:#fff;border-bottom:1px solid #c6c6c6;border-left:1px solid #b4b4b4;"></div>
<div style="position:absolute;left:692.66px;top:225.72px;width:98.74px;height:19.73px;background:#fff;border-bottom:1px solid #c6c6c6;border-left:1px solid #c0c0c0;border-right:1px solid #c0c0c0;"></div>
<div class="t" style="left:279.7px;top:226.85px;font-size:11px;">1</div>
<div class="t" style="left:312.17px;top:224.8px;font-size:10.9px;">Схема нумерации внутр. линий 01</div>
<div class="t" style="left:575.34px;top:224.66px;font-size:10.7px;-webkit-text-stroke:0.1px;">1</div>
<div class="t" style="left:695.3px;top:224.66px;font-size:10.9px;letter-spacing:-0.103px;-webkit-text-stroke:0;color:#222;">XX</div>
<div class="btn" style="position:absolute;left:246.49px;top:226.74px;width:26.62px;height:16.82px;border-color:#858585;"></div>
<div style="position:absolute;left:251.76px;top:227.18px;width:16.09px;height:16.38px;"><svg width="100%" height="100%" viewBox="0 0 16 16" preserveAspectRatio="none"><defs><linearGradient id="og1" x1="0" y1="0" x2="1" y2="1"><stop offset="0" stop-color="#f79a36"/><stop offset="1" stop-color="#fdd7a0"/></linearGradient></defs><path d="M0.4 4 L4.7 4.6 L10 7.7 L13.2 11.4 L15.1 15.4 L11.9 15.1 L5 10.8 L1.6 6.5 Z" fill="#f4f6f8" stroke="#1a1a1a" stroke-width="1.3" stroke-linejoin="round"/><path d="M4.7 0.4 L6.9 0.9 L8.8 3.1 L13.2 2.8 L15.3 5.6 L15.3 15 L13.2 11.4 L11.9 7.1 L6.3 4.6 L4.7 3.6 Z" fill="url(#og1)" stroke="#1a1a1a" stroke-width="1.1" stroke-linejoin="round"/><path d="M15.2 5.6 L15.2 15.2" stroke="#111" stroke-width="1.6"/></svg></div>
<div style="position:absolute;left:274.14px;top:245.45px;width:35.4px;height:19.73px;background:linear-gradient(90deg,#fbfbfd,#f1f2f6);border-bottom:1px solid #c9c9c9;border-top:1px solid #fff;border-left:1px solid #bcbcbc;"></div>
<div style="position:absolute;left:309.54px;top:245.45px;width:261.56px;height:19.73px;background:#efefef;border-bottom:1px solid #bdbdbd;border-top:1px solid #fdfdfd;"></div>
<div style="position:absolute;left:571.1px;top:245.45px;width:121.56px;height:19.73px;background:#fff;border-bottom:1px solid #c6c6c6;border-left:1px solid #b4b4b4;"></div>
<div style="position:absolute;left:692.66px;top:245.45px;width:98.74px;height:19.73px;background:#fff;border-bottom:1px solid #c6c6c6;border-left:1px solid #c0c0c0;border-right:1px solid #c0c0c0;"></div>
<div class="t" style="left:279.7px;top:246.58px;font-size:11px;">2</div>
<div class="t" style="left:312.17px;top:244.53px;font-size:10.9px;">Схема нумерации внутр. линий 02</div>
<div class="t" style="left:575.34px;top:244.39px;font-size:10.7px;-webkit-text-stroke:0.1px;">2</div>
<div class="t" style="left:695.3px;top:244.39px;font-size:10.9px;letter-spacing:-0.103px;-webkit-text-stroke:0;color:#222;">XX</div>
<div style="position:absolute;left:274.14px;top:265.18px;width:35.4px;height:19.73px;background:linear-gradient(90deg,#fbfbfd,#f1f2f6);border-bottom:1px solid #c9c9c9;border-top:1px solid #fff;border-left:1px solid #bcbcbc;"></div>
<div style="position:absolute;left:309.54px;top:265.18px;width:261.56px;height:19.73px;background:#efefef;border-bottom:1px solid #bdbdbd;border-top:1px solid #fdfdfd;"></div>
<div style="position:absolute;left:571.1px;top:265.18px;width:121.56px;height:19.73px;background:#fff;border-bottom:1px solid #c6c6c6;border-left:1px solid #b4b4b4;"></div>
<div style="position:absolute;left:692.66px;top:265.18px;width:98.74px;height:19.73px;background:#fff;border-bottom:1px solid #c6c6c6;border-left:1px solid #c0c0c0;border-right:1px solid #c0c0c0;"></div>
<div class="t" style="left:279.7px;top:266.31px;font-size:11px;">3</div>
<div class="t" style="left:312.17px;top:264.26px;font-size:10.9px;">Схема нумерации внутр. линий 03</div>
<div class="t" style="left:695.3px;top:264.11px;font-size:10.9px;letter-spacing:-0.103px;-webkit-text-stroke:0;color:#222;">XX</div>
<div style="position:absolute;left:274.14px;top:284.9px;width:35.4px;height:19.73px;background:linear-gradient(90deg,#fbfbfd,#f1f2f6);border-bottom:1px solid #c9c9c9;border-top:1px solid #fff;border-left:1px solid #bcbcbc;"></div>
<div style="position:absolute;left:309.54px;top:284.9px;width:261.56px;height:19.73px;background:#efefef;border-bottom:1px solid #bdbdbd;border-top:1px solid #fdfdfd;"></div>
<div style="position:absolute;left:571.1px;top:284.9px;width:121.56px;height:19.73px;background:#fff;border-bottom:1px solid #c6c6c6;border-left:1px solid #b4b4b4;"></div>
<div style="position:absolute;left:692.66px;top:284.9px;width:98.74px;height:19.73px;background:#fff;border-bottom:1px solid #c6c6c6;border-left:1px solid #c0c0c0;border-right:1px solid #c0c0c0;"></div>
<div class="t" style="left:279.7px;top:286.04px;font-size:11px;">4</div>
<div class="t" style="left:312.17px;top:283.99px;font-size:10.9px;">Схема нумерации внутр. линий 04</div>
<div class="t" style="left:695.3px;top:283.84px;font-size:10.9px;letter-spacing:-0.103px;-webkit-text-stroke:0;color:#222;">XX</div>
<div style="position:absolute;left:274.14px;top:304.63px;width:35.4px;height:19.73px;background:linear-gradient(90deg,#fbfbfd,#f1f2f6);border-bottom:1px solid #c9c9c9;border-top:1px solid #fff;border-left:1px solid #bcbcbc;"></div>
<div style="position:absolute;left:309.54px;top:304.63px;width:261.56px;height:19.73px;background:#efefef;border-bottom:1px solid #bdbdbd;border-top:1px solid #fdfdfd;"></div>
<div style="position:absolute;left:571.1px;top:304.63px;width:121.56px;height:19.73px;background:#fff;border-bottom:1px solid #c6c6c6;border-left:1px solid #b4b4b4;"></div>
<div style="position:absolute;left:692.66px;top:304.63px;width:98.74px;height:19.73px;background:#fff;border-bottom:1px solid #c6c6c6;border-left:1px solid #c0c0c0;border-right:1px solid #c0c0c0;"></div>
<div class="t" style="left:279.7px;top:305.77px;font-size:11px;">5</div>
<div class="t" style="left:312.17px;top:303.72px;font-size:10.9px;">Схема нумерации внутр. линий 05</div>
<div class="t" style="left:695.3px;top:303.57px;font-size:10.9px;letter-spacing:-0.103px;-webkit-text-stroke:0;color:#222;">XX</div>
<div style="position:absolute;left:274.14px;top:324.36px;width:35.4px;height:19.73px;background:linear-gradient(90deg,#fbfbfd,#f1f2f6);border-bottom:1px solid #c9c9c9;border-top:1px solid #fff;border-left:1px solid #bcbcbc;"></div>
<div style="position:absolute;left:309.54px;top:324.36px;width:261.56px;height:19.73px;background:#efefef;border-bottom:1px solid #bdbdbd;border-top:1px solid #fdfdfd;"></div>
<div style="position:absolute;left:571.1px;top:324.36px;width:121.56px;height:19.73px;background:#fff;border-bottom:1px solid #c6c6c6;border-left:1px solid #b4b4b4;"></div>
<div style="position:absolute;left:692.66px;top:324.36px;width:98.74px;height:19.73px;background:#fff;border-bottom:1px solid #c6c6c6;border-left:1px solid #c0c0c0;border-right:1px solid #c0c0c0;"></div>
<div class="t" style="left:279.7px;top:325.49px;font-size:11px;">6</div>
<div class="t" style="left:312.17px;top:323.45px;font-size:10.9px;">Схема нумерации внутр. линий 06</div>
<div class="t" style="left:695.3px;top:323.3px;font-size:10.9px;letter-spacing:-0.103px;-webkit-text-stroke:0;color:#222;">XX</div>
<div style="position:absolute;left:274.14px;top:344.09px;width:35.4px;height:19.73px;background:linear-gradient(90deg,#fbfbfd,#f1f2f6);border-bottom:1px solid #c9c9c9;border-top:1px solid #fff;border-left:1px solid #bcbcbc;"></div>
<div style="position:absolute;left:309.54px;top:344.09px;width:261.56px;height:19.73px;background:#efefef;border-bottom:1px solid #bdbdbd;border-top:1px solid #fdfdfd;"></div>
<div style="position:absolute;left:571.1px;top:344.09px;width:121.56px;height:19.73px;background:#fff;border-bottom:1px solid #c6c6c6;border-left:1px solid #b4b4b4;"></div>
<div style="position:absolute;left:692.66px;top:344.09px;width:98.74px;height:19.73px;background:#fff;border-bottom:1px solid #c6c6c6;border-left:1px solid #c0c0c0;border-right:1px solid #c0c0c0;"></div>
<div class="t" style="left:279.7px;top:345.22px;font-size:11px;">7</div>
<div class="t" style="left:312.17px;top:343.18px;font-size:10.9px;">Схема нумерации внутр. линий 07</div>
<div class="t" style="left:695.3px;top:343.03px;font-size:10.9px;letter-spacing:-0.103px;-webkit-text-stroke:0;color:#222;">XX</div>
<div style="position:absolute;left:274.14px;top:363.82px;width:35.4px;height:19.73px;background:linear-gradient(90deg,#fbfbfd,#f1f2f6);border-bottom:1px solid #c9c9c9;border-top:1px solid #fff;border-left:1px solid #bcbcbc;"></div>
<div style="position:absolute;left:309.54px;top:363.82px;width:261.56px;height:19.73px;background:#efefef;border-bottom:1px solid #bdbdbd;border-top:1px solid #fdfdfd;"></div>
<div style="position:absolute;left:571.1px;top:363.82px;width:121.56px;height:19.73px;background:#fff;border-bottom:1px solid #c6c6c6;border-left:1px solid #b4b4b4;"></div>
<div style="position:absolute;left:692.66px;top:363.82px;width:98.74px;height:19.73px;background:#fff;border-bottom:1px solid #c6c6c6;border-left:1px solid #c0c0c0;border-right:1px solid #c0c0c0;"></div>
<div class="t" style="left:279.7px;top:364.95px;font-size:11px;">8</div>
<div class="t" style="left:312.17px;top:362.9px;font-size:10.9px;">Схема нумерации внутр. линий 08</div>
<div class="t" style="left:695.3px;top:362.76px;font-size:10.9px;letter-spacing:-0.103px;-webkit-text-stroke:0;color:#222;">XX</div>
<div style="position:absolute;left:274.14px;top:383.55px;width:35.4px;height:19.73px;background:linear-gradient(90deg,#fbfbfd,#f1f2f6);border-bottom:1px solid #c9c9c9;border-top:1px solid #fff;border-left:1px solid #bcbcbc;"></div>
<div style="position:absolute;left:309.54px;top:383.55px;width:261.56px;height:19.73px;background:#efefef;border-bottom:1px solid #bdbdbd;border-top:1px solid #fdfdfd;"></div>
<div style="position:absolute;left:571.1px;top:383.55px;width:121.56px;height:19.73px;background:#fff;border-bottom:1px solid #c6c6c6;border-left:1px solid #b4b4b4;"></div>
<div style="position:absolute;left:692.66px;top:383.55px;width:98.74px;height:19.73px;background:#fff;border-bottom:1px solid #c6c6c6;border-left:1px solid #c0c0c0;border-right:1px solid #c0c0c0;"></div>
<div class="t" style="left:279.7px;top:384.68px;font-size:11px;">9</div>
<div class="t" style="left:312.17px;top:382.63px;font-size:10.9px;">Схема нумерации внутр. линий 09</div>
<div class="t" style="left:695.3px;top:382.49px;font-size:10.9px;letter-spacing:-0.103px;-webkit-text-stroke:0;color:#222;">XX</div>
<div style="position:absolute;left:274.14px;top:403.28px;width:35.4px;height:19.73px;background:linear-gradient(90deg,#fbfbfd,#f1f2f6);border-bottom:1px solid #c9c9c9;border-top:1px solid #fff;border-left:1px solid #bcbcbc;"></div>
<div style="position:absolute;left:309.54px;top:403.28px;width:261.56px;height:19.73px;background:#efefef;border-bottom:1px solid #bdbdbd;border-top:1px solid #fdfdfd;"></div>
<div style="position:absolute;left:571.1px;top:403.28px;width:121.56px;height:19.73px;background:#fff;border-bottom:1px solid #c6c6c6;border-left:1px solid #b4b4b4;"></div>
<div style="position:absolute;left:692.66px;top:403.28px;width:98.74px;height:19.73px;background:#fff;border-bottom:1px solid #c6c6c6;border-left:1px solid #c0c0c0;border-right:1px solid #c0c0c0;"></div>
<div class="t" style="left:279.7px;top:404.41px;font-size:11px;">10</div>
<div class="t" style="left:312.17px;top:402.36px;font-size:10.9px;">Схема нумерации внутр. линий 10</div>
<div class="t" style="left:695.3px;top:402.22px;font-size:10.9px;letter-spacing:-0.103px;-webkit-text-stroke:0;color:#222;">XX</div>
<div style="position:absolute;left:274.14px;top:423.01px;width:35.4px;height:19.73px;background:linear-gradient(90deg,#fbfbfd,#f1f2f6);border-bottom:1px solid #c9c9c9;border-top:1px solid #fff;border-left:1px solid #bcbcbc;"></div>
<div style="position:absolute;left:309.54px;top:423.01px;width:261.56px;height:19.73px;background:#efefef;border-bottom:1px solid #bdbdbd;border-top:1px solid #fdfdfd;"></div>
<div style="position:absolute;left:571.1px;top:423.01px;width:121.56px;height:19.73px;background:#fff;border-bottom:1px solid #c6c6c6;border-left:1px solid #b4b4b4;"></div>
<div style="position:absolute;left:692.66px;top:423.01px;width:98.74px;height:19.73px;background:#fff;border-bottom:1px solid #c6c6c6;border-left:1px solid #c0c0c0;border-right:1px solid #c0c0c0;"></div>
<div class="t" style="left:279.7px;top:424.14px;font-size:11px;">11</div>
<div class="t" style="left:312.17px;top:422.09px;font-size:10.9px;">Схема нумерации внутр. линий 11</div>
<div class="t" style="left:695.3px;top:421.94px;font-size:10.9px;letter-spacing:-0.103px;-webkit-text-stroke:0;color:#222;">XX</div>
<div class="btn" style="position:absolute;left:246.49px;top:424.03px;width:26.62px;height:16.82px;border-color:#858585;"></div>
<div style="position:absolute;left:251.76px;top:424.47px;width:16.09px;height:16.38px;"><svg width="100%" height="100%" viewBox="0 0 16 16" preserveAspectRatio="none"><defs><linearGradient id="og11" x1="0" y1="0" x2="1" y2="1"><stop offset="0" stop-color="#f79a36"/><stop offset="1" stop-color="#fdd7a0"/></linearGradient></defs><path d="M0.4 4 L4.7 4.6 L10 7.7 L13.2 11.4 L15.1 15.4 L11.9 15.1 L5 10.8 L1.6 6.5 Z" fill="#f4f6f8" stroke="#1a1a1a" stroke-width="1.3" stroke-linejoin="round"/><path d="M4.7 0.4 L6.9 0.9 L8.8 3.1 L13.2 2.8 L15.3 5.6 L15.3 15 L13.2 11.4 L11.9 7.1 L6.3 4.6 L4.7 3.6 Z" fill="url(#og11)" stroke="#1a1a1a" stroke-width="1.1" stroke-linejoin="round"/><path d="M15.2 5.6 L15.2 15.2" stroke="#111" stroke-width="1.6"/></svg></div>
<div style="position:absolute;left:274.14px;top:442.73px;width:35.4px;height:19.73px;background:linear-gradient(90deg,#fbfbfd,#f1f2f6);border-bottom:1px solid #c9c9c9;border-top:1px solid #fff;border-left:1px solid #bcbcbc;"></div>
<div style="position:absolute;left:309.54px;top:442.73px;width:261.56px;height:19.73px;background:#efefef;border-bottom:1px solid #bdbdbd;border-top:1px solid #fdfdfd;"></div>
<div style="position:absolute;left:571.1px;top:442.73px;width:121.56px;height:19.73px;background:#fff;border-bottom:1px solid #c6c6c6;border-left:1px solid #b4b4b4;"></div>
<div style="position:absolute;left:692.66px;top:442.73px;width:98.74px;height:19.73px;background:#fff;border-bottom:1px solid #c6c6c6;border-left:1px solid #c0c0c0;border-right:1px solid #c0c0c0;"></div>
<div class="t" style="left:279.7px;top:443.87px;font-size:11px;">12</div>
<div class="t" style="left:312.17px;top:441.82px;font-size:10.9px;">Схема нумерации внутр. линий 12</div>
<div class="t" style="left:695.3px;top:441.67px;font-size:10.9px;letter-spacing:-0.103px;-webkit-text-stroke:0;color:#222;">XX</div>
<div style="position:absolute;left:274.14px;top:462.46px;width:35.4px;height:19.73px;background:linear-gradient(90deg,#fbfbfd,#f1f2f6);border-bottom:1px solid #c9c9c9;border-top:1px solid #fff;border-left:1px solid #bcbcbc;"></div>
<div style="position:absolute;left:309.54px;top:462.46px;width:261.56px;height:19.73px;background:#efefef;border-bottom:1px solid #bdbdbd;border-top:1px solid #fdfdfd;"></div>
<div style="position:absolute;left:571.1px;top:462.46px;width:121.56px;height:19.73px;background:#fff;border-bottom:1px solid #c6c6c6;border-left:1px solid #b4b4b4;"></div>
<div style="position:absolute;left:692.66px;top:462.46px;width:98.74px;height:19.73px;background:#fff;border-bottom:1px solid #c6c6c6;border-left:1px solid #c0c0c0;border-right:1px solid #c0c0c0;"></div>
<div class="t" style="left:279.7px;top:463.6px;font-size:11px;">13</div>
<div class="t" style="left:312.17px;top:461.55px;font-size:10.9px;">Схема нумерации внутр. линий 13</div>
<div class="t" style="left:695.3px;top:461.4px;font-size:10.9px;letter-spacing:-0.103px;-webkit-text-stroke:0;color:#222;">XX</div>
<div style="position:absolute;left:274.14px;top:482.19px;width:35.4px;height:19.73px;background:linear-gradient(90deg,#fbfbfd,#f1f2f6);border-bottom:1px solid #c9c9c9;border-top:1px solid #fff;border-left:1px solid #bcbcbc;"></div>
<div style="position:absolute;left:309.54px;top:482.19px;width:261.56px;height:19.73px;background:#efefef;border-bottom:1px solid #bdbdbd;border-top:1px solid #fdfdfd;"></div>
<div style="position:absolute;left:571.1px;top:482.19px;width:121.56px;height:19.73px;background:#fff;border-bottom:1px solid #c6c6c6;border-left:1px solid #b4b4b4;"></div>
<div style="position:absolute;left:692.66px;top:482.19px;width:98.74px;height:19.73px;background:#fff;border-bottom:1px solid #c6c6c6;border-left:1px solid #c0c0c0;border-right:1px solid #c0c0c0;"></div>
<div class="t" style="left:279.7px;top:483.32px;font-size:11px;">14</div>
<div class="t" style="left:312.17px;top:481.28px;font-size:10.9px;">Схема нумерации внутр. линий 14</div>
<div class="t" style="left:695.3px;top:481.13px;font-size:10.9px;letter-spacing:-0.103px;-webkit-text-stroke:0;color:#222;">XX</div>
<div style="position:absolute;left:274.14px;top:501.92px;width:35.4px;height:19.73px;background:linear-gradient(90deg,#fbfbfd,#f1f2f6);border-bottom:1px solid #c9c9c9;border-top:1px solid #fff;border-left:1px solid #bcbcbc;"></div>
<div style="position:absolute;left:309.54px;top:501.92px;width:261.56px;height:19.73px;background:#efefef;border-bottom:1px solid #bdbdbd;border-top:1px solid #fdfdfd;"></div>
<div style="position:absolute;left:571.1px;top:501.92px;width:121.56px;height:19.73px;background:#fff;border-bottom:1px solid #c6c6c6;border-left:1px solid #b4b4b4;"></div>
<div style="position:absolute;left:692.66px;top:501.92px;width:98.74px;height:19.73px;background:#fff;border-bottom:1px solid #c6c6c6;border-left:1px solid #c0c0c0;border-right:1px solid #c0c0c0;"></div>
<div class="t" style="left:279.7px;top:503.05px;font-size:11px;">15</div>
<div class="t" style="left:312.17px;top:501.0px;font-size:10.9px;">Схема нумерации внутр. линий 15</div>
<div class="t" style="left:695.3px;top:500.86px;font-size:10.9px;letter-spacing:-0.103px;-webkit-text-stroke:0;color:#222;">XX</div>
<div style="position:absolute;left:274.14px;top:521.65px;width:35.4px;height:19.73px;background:linear-gradient(90deg,#fbfbfd,#f1f2f6);border-bottom:1px solid #c9c9c9;border-top:1px solid #fff;border-left:1px solid #bcbcbc;"></div>
<div style="position:absolute;left:309.54px;top:521.65px;width:261.56px;height:19.73px;background:#efefef;border-bottom:1px solid #bdbdbd;border-top:1px solid #fdfdfd;"></div>
<div style="position:absolute;left:571.1px;top:521.65px;width:121.56px;height:19.73px;background:#fff;border-bottom:1px solid #c6c6c6;border-left:1px solid #b4b4b4;"></div>
<div style="position:absolute;left:692.66px;top:521.65px;width:98.74px;height:19.73px;background:#fff;border-bottom:1px solid #c6c6c6;border-left:1px solid #c0c0c0;border-right:1px solid #c0c0c0;"></div>
<div class="t" style="left:279.7px;top:522.78px;font-size:11px;">16</div>
<div class="t" style="left:312.17px;top:520.73px;font-size:10.9px;">Схема нумерации внутр. линий 16</div>
<div class="t" style="left:695.3px;top:520.59px;font-size:10.9px;letter-spacing:-0.103px;-webkit-text-stroke:0;color:#222;">XX</div>
<div style="position:absolute;left:274.14px;top:541.38px;width:35.4px;height:19.73px;background:linear-gradient(90deg,#fbfbfd,#f1f2f6);border-bottom:1px solid #c9c9c9;border-top:1px solid #fff;border-left:1px solid #bcbcbc;"></div>
<div style="position:absolute;left:309.54px;top:541.38px;width:261.56px;height:19.73px;background:#efefef;border-bottom:1px solid #bdbdbd;border-top:1px solid #fdfdfd;"></div>
<div style="position:absolute;left:571.1px;top:541.38px;width:121.56px;height:19.73px;background:#fff;border-bottom:1px solid #c6c6c6;border-left:1px solid #b4b4b4;"></div>
<div style="position:absolute;left:692.66px;top:541.38px;width:98.74px;height:19.73px;background:#fff;border-bottom:1px solid #c6c6c6;border-left:1px solid #c0c0c0;border-right:1px solid #c0c0c0;"></div>
<div class="t" style="left:279.7px;top:542.51px;font-size:11px;">17</div>
<div class="t" style="left:312.17px;top:540.46px;font-size:10.9px;">Схема нумерации внутр. линий 17</div>
<div class="t" style="left:695.3px;top:540.32px;font-size:10.9px;letter-spacing:-0.103px;-webkit-text-stroke:0;color:#222;">XX</div>
<div style="position:absolute;left:274.14px;top:561.11px;width:35.4px;height:19.73px;background:linear-gradient(90deg,#fbfbfd,#f1f2f6);border-bottom:1px solid #c9c9c9;border-top:1px solid #fff;border-left:1px solid #bcbcbc;"></div>
<div style="position:absolute;left:309.54px;top:561.11px;width:261.56px;height:19.73px;background:#efefef;border-bottom:1px solid #bdbdbd;border-top:1px solid #fdfdfd;"></div>
<div style="position:absolute;left:571.1px;top:561.11px;width:121.56px;height:19.73px;background:#fff;border-bottom:1px solid #c6c6c6;border-left:1px solid #b4b4b4;"></div>
<div style="position:absolute;left:692.66px;top:561.11px;width:98.74px;height:19.73px;background:#fff;border-bottom:1px solid #c6c6c6;border-left:1px solid #c0c0c0;border-right:1px solid #c0c0c0;"></div>
<div class="t" style="left:279.7px;top:562.24px;font-size:11px;">18</div>
<div class="t" style="left:312.17px;top:560.19px;font-size:10.9px;">Схема нумерации внутр. линий 18</div>
<div class="t" style="left:695.3px;top:560.04px;font-size:10.9px;letter-spacing:-0.103px;-webkit-text-stroke:0;color:#222;">XX</div>
<div style="position:absolute;left:274.14px;top:580.83px;width:35.4px;height:19.73px;background:linear-gradient(90deg,#fbfbfd,#f1f2f6);border-bottom:1px solid #c9c9c9;border-top:1px solid #fff;border-left:1px solid #bcbcbc;"></div>
<div style="position:absolute;left:309.54px;top:580.83px;width:261.56px;height:19.73px;background:#efefef;border-bottom:1px solid #bdbdbd;border-top:1px solid #fdfdfd;"></div>
<div style="position:absolute;left:571.1px;top:580.83px;width:121.56px;height:19.73px;background:#fff;border-bottom:1px solid #c6c6c6;border-left:1px solid #b4b4b4;"></div>
<div style="position:absolute;left:692.66px;top:580.83px;width:98.74px;height:19.73px;background:#fff;border-bottom:1px solid #c6c6c6;border-left:1px solid #c0c0c0;border-right:1px solid #c0c0c0;"></div>
<div class="t" style="left:279.7px;top:581.97px;font-size:11px;">19</div>
<div class="t" style="left:312.17px;top:579.92px;font-size:10.9px;">Схема нумерации внутр. линий 19</div>
<div class="t" style="left:695.3px;top:579.77px;font-size:10.9px;letter-spacing:-0.103px;-webkit-text-stroke:0;color:#222;">XX</div>
<div style="position:absolute;left:274.14px;top:600.56px;width:35.4px;height:19.73px;background:linear-gradient(90deg,#fbfbfd,#f1f2f6);border-bottom:1px solid #c9c9c9;border-top:1px solid #fff;border-left:1px solid #bcbcbc;"></div>
<div style="position:absolute;left:309.54px;top:600.56px;width:261.56px;height:19.73px;background:#efefef;border-bottom:1px solid #bdbdbd;border-top:1px solid #fdfdfd;"></div>
<div style="position:absolute;left:571.1px;top:600.56px;width:121.56px;height:19.73px;background:#fff;border-bottom:1px solid #c6c6c6;border-left:1px solid #b4b4b4;"></div>
<div style="position:absolute;left:692.66px;top:600.56px;width:98.74px;height:19.73px;background:#fff;border-bottom:1px solid #c6c6c6;border-left:1px solid #c0c0c0;border-right:1px solid #c0c0c0;"></div>
<div class="t" style="left:279.7px;top:601.7px;font-size:11px;">20</div>
<div class="t" style="left:312.17px;top:599.65px;font-size:10.9px;">Схема нумерации внутр. линий 20</div>
<div class="t" style="left:695.3px;top:599.5px;font-size:10.9px;letter-spacing:-0.103px;-webkit-text-stroke:0;color:#222;">XX</div>
<div style="position:absolute;left:274.14px;top:620.29px;width:35.4px;height:19.73px;background:linear-gradient(90deg,#fbfbfd,#f1f2f6);border-bottom:1px solid #c9c9c9;border-top:1px solid #fff;border-left:1px solid #bcbcbc;"></div>
<div style="position:absolute;left:309.54px;top:620.29px;width:261.56px;height:19.73px;background:#efefef;border-bottom:1px solid #bdbdbd;border-top:1px solid #fdfdfd;"></div>
<div style="position:absolute;left:571.1px;top:620.29px;width:121.56px;height:19.73px;background:#fff;border-bottom:1px solid #c6c6c6;border-left:1px solid #b4b4b4;"></div>
<div style="position:absolute;left:692.66px;top:620.29px;width:98.74px;height:19.73px;background:#fff;border-bottom:1px solid #c6c6c6;border-left:1px solid #c0c0c0;border-right:1px solid #c0c0c0;"></div>
<div class="t" style="left:279.7px;top:621.42px;font-size:11px;">21</div>
<div class="t" style="left:312.17px;top:619.38px;font-size:10.9px;">Схема нумерации внутр. линий 21</div>
<div class="t" style="left:575.34px;top:619.23px;font-size:10.7px;-webkit-text-stroke:0.1px;">5</div>
<div class="t" style="left:695.3px;top:619.23px;font-size:10.9px;letter-spacing:-0.103px;-webkit-text-stroke:0;color:#222;">XX</div>
<div class="btn" style="position:absolute;left:246.49px;top:621.32px;width:26.62px;height:16.82px;border-color:#858585;"></div>
<div style="position:absolute;left:251.76px;top:621.75px;width:16.09px;height:16.38px;"><svg width="100%" height="100%" viewBox="0 0 16 16" preserveAspectRatio="none"><defs><linearGradient id="og21" x1="0" y1="0" x2="1" y2="1"><stop offset="0" stop-color="#f79a36"/><stop offset="1" stop-color="#fdd7a0"/></linearGradient></defs><path d="M0.4 4 L4.7 4.6 L10 7.7 L13.2 11.4 L15.1 15.4 L11.9 15.1 L5 10.8 L1.6 6.5 Z" fill="#f4f6f8" stroke="#1a1a1a" stroke-width="1.3" stroke-linejoin="round"/><path d="M4.7 0.4 L6.9 0.9 L8.8 3.1 L13.2 2.8 L15.3 5.6 L15.3 15 L13.2 11.4 L11.9 7.1 L6.3 4.6 L4.7 3.6 Z" fill="url(#og21)" stroke="#1a1a1a" stroke-width="1.1" stroke-linejoin="round"/><path d="M15.2 5.6 L15.2 15.2" stroke="#111" stroke-width="1.6"/></svg></div>
<div style="position:absolute;left:274.14px;top:640.02px;width:35.4px;height:19.73px;background:linear-gradient(90deg,#fbfbfd,#f1f2f6);border-bottom:1px solid #c9c9c9;border-top:1px solid #fff;border-left:1px solid #bcbcbc;"></div>
<div style="position:absolute;left:309.54px;top:640.02px;width:261.56px;height:19.73px;background:#efefef;border-bottom:1px solid #bdbdbd;border-top:1px solid #fdfdfd;"></div>
<div style="position:absolute;left:571.1px;top:640.02px;width:121.56px;height:19.73px;background:#fff;border-bottom:1px solid #c6c6c6;border-left:1px solid #b4b4b4;"></div>
<div style="position:absolute;left:692.66px;top:640.02px;width:98.74px;height:19.73px;background:#fff;border-bottom:1px solid #c6c6c6;border-left:1px solid #c0c0c0;border-right:1px solid #c0c0c0;"></div>
<div class="t" style="left:279.7px;top:641.15px;font-size:11px;">22</div>
<div class="t" style="left:312.17px;top:639.1px;font-size:10.9px;">Схема нумерации внутр. линий 22</div>
<div class="t" style="left:575.34px;top:638.96px;font-size:10.7px;-webkit-text-stroke:0.1px;">6</div>
<div class="t" style="left:695.3px;top:638.96px;font-size:10.9px;letter-spacing:-0.103px;-webkit-text-stroke:0;color:#222;">XX</div>
<div style="position:absolute;left:843.78px;top:190.46px;width:15.8px;height:468.7px;background:#f0f0f0;border-left:1px solid #e2e2e2;"></div>
<div style="position:absolute;left:844.51px;top:207.73px;width:14.63px;height:146.29px;border:1px solid #979797;border-radius:2px;background:linear-gradient(90deg,#f2f2f2,#e4e4e4 45%,#cfcfcf 50%,#d8d8d8);"></div>
<div style="position:absolute;left:847.87px;top:196.02px;width:7.61px;height:4.1px;"><svg width="100%" height="100%" viewBox="0 0 8 4" preserveAspectRatio="none"><path d="M0 4 L4 0 L8 4 Z" fill="#3a3a3a"/></svg></div>
<div style="position:absolute;left:847.87px;top:650.09px;width:7.61px;height:4.1px;"><svg width="100%" height="100%" viewBox="0 0 8 4" preserveAspectRatio="none"><path d="M0 0 L4 4 L8 0 Z" fill="#3a3a3a"/></svg></div>
<div style="position:absolute;left:848.46px;top:276.48px;width:6.58px;height:0.88px;background:#7a7a7a;"></div>
<div style="position:absolute;left:848.46px;top:278.53px;width:6.58px;height:0.88px;background:#7a7a7a;"></div>
<div style="position:absolute;left:848.46px;top:280.58px;width:6.58px;height:0.88px;background:#7a7a7a;"></div>
<div style="position:absolute;left:848.46px;top:282.62px;width:6.58px;height:0.88px;background:#7a7a7a;"></div>
</div></body></html>
